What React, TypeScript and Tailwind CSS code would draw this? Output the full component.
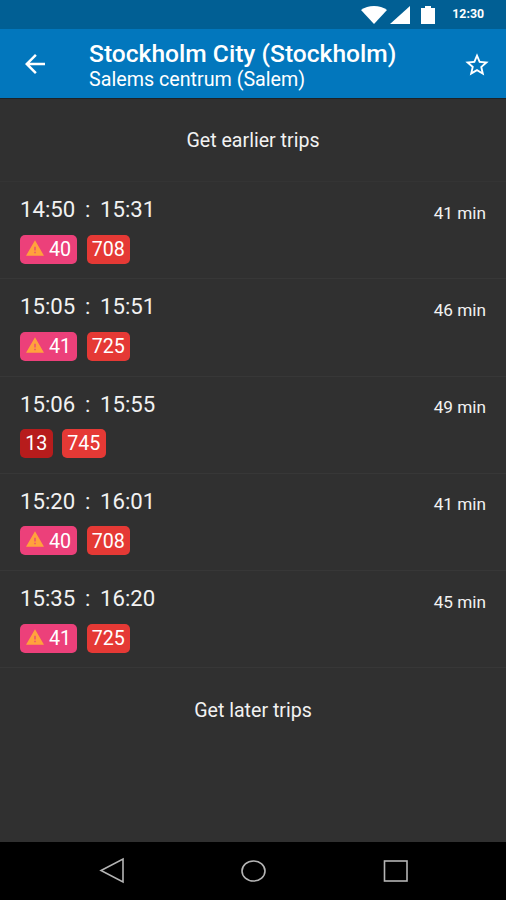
type Badge = {
  line: string;
  color: string;
  width: string;
  warning?: boolean;
};

type Trip = {
  departure: string;
  arrival: string;
  duration: string;
  badges: Badge[];
};

const bus = (line: string): Badge => ({
  line,
  color: "bg-[#e53935]",
  width: "w-[43.5px]",
});

const train = (line: string): Badge => ({
  line,
  color: "bg-[#ec407a]",
  width: "w-[57px]",
  warning: true,
});

const metro = (line: string): Badge => ({
  line,
  color: "bg-[#b71c1c]",
  width: "w-[32.5px]",
});

const trips: Trip[] = [
  { departure: "14:50", arrival: "15:31", duration: "41 min", badges: [train("40"), bus("708")] },
  { departure: "15:05", arrival: "15:51", duration: "46 min", badges: [train("41"), bus("725")] },
  { departure: "15:06", arrival: "15:55", duration: "49 min", badges: [metro("13"), bus("745")] },
  { departure: "15:20", arrival: "16:01", duration: "41 min", badges: [train("40"), bus("708")] },
  { departure: "15:35", arrival: "16:20", duration: "45 min", badges: [train("41"), bus("725")] },
];

function StatusBar() {
  return (
    <div className="flex h-[29px] shrink-0 items-center justify-end bg-[#015f94] pr-[22px]">
      <svg className="h-[18px] w-[26px]" viewBox="0 0 26 18" fill="#fff">
        <path d="M0 4C7-1.2 19-1.2 26 4L13 18Z" />
      </svg>
      <svg className="ml-[3px] h-[18px] w-[20px]" viewBox="0 0 20 18" fill="#fff">
        <path d="M20 0V18H0Z" />
      </svg>
      <svg className="ml-[11px] h-[18px] w-[14px]" viewBox="0 0 14 18" fill="#fff">
        <path d="M4 0H10V2H14V18H0V2H4Z" />
      </svg>
      <span className="ml-[17px] text-[12.3px] leading-none font-bold text-white">
        12:30
      </span>
    </div>
  );
}

function Header() {
  return (
    <header className="flex h-[70px] shrink-0 items-center border-b border-[#1d2327] bg-[#0277bd] pr-[15px] pl-[20px] text-white">
      <svg className="mt-px size-[30px]" viewBox="0 0 24 24" fill="currentColor">
        <path d="M20 11H7.83l5.59-5.59L12 4l-8 8 8 8 1.41-1.41L7.83 13H20v-2z" />
      </svg>
      <div className="mt-[4px] ml-[39px] flex-1 whitespace-nowrap">
        <h1 className="text-[24.6px] leading-[28px] font-medium">
          Stockholm City (Stockholm)
        </h1>
        <p className="text-[19.7px] leading-[23px]">Salems centrum (Salem)</p>
      </div>
      <svg className="mt-[2px] size-[28px]" viewBox="0 0 24 24" fill="currentColor">
        <path d="M22 9.24l-7.19-.62L12 2 9.19 8.63 2 9.24l5.46 4.73L5.82 21 12 17.27 18.18 21l-1.63-7.03L22 9.24zM12 15.4l-3.76 2.27 1-4.28-3.32-2.88 4.38-.38L12 6.1l1.71 4.04 4.38.38-3.32 2.88 1 4.28L12 15.4z" />
      </svg>
    </header>
  );
}

function LineBadge({ badge }: { badge: Badge }) {
  return (
    <span
      className={`flex h-[29px] items-center justify-center rounded-[5px] pt-px text-[19.7px] text-white ${badge.color} ${badge.width}`}
    >
      {badge.warning && (
        <svg className="mr-[5px] mb-[4px] h-[16px] w-[18px]" viewBox="0 0 22 19" fill="#ffa23c">
          <path d="M0 19h22L11 0 0 19zm11.800-3h-1.600v-2h1.600v2zm0-3.500h-1.600V8h1.600v4.500z" />
        </svg>
      )}
      {badge.line}
    </span>
  );
}

function TripRow({ trip }: { trip: Trip }) {
  return (
    <li className="flex h-[97.2px] justify-between border-b border-[#373737] pr-[20px] pl-[20px]">
      <div>
        <div className="mt-[13.5px] flex h-[28px] items-center text-[22.2px]">
          <span className="w-[65px]">{trip.departure}</span>
          <span className="w-[15px]">:</span>
          <span>{trip.arrival}</span>
        </div>
        <div className="mt-[11px] flex gap-[9.5px]">
          {trip.badges.map((badge) => (
            <LineBadge key={badge.line} badge={badge} />
          ))}
        </div>
      </div>
      <span className="mt-[19.5px] text-[17.2px] leading-[22px]">{trip.duration}</span>
    </li>
  );
}

function NavigationBar() {
  return (
    <nav className="h-[58px] shrink-0 bg-black">
      <svg className="h-full w-full" viewBox="0 0 506 58" fill="none" stroke="#b5b5b5" strokeWidth="1.6">
        <path d="M123 17V40L101 28.500Z" />
        <ellipse cx="253.500" cy="29" rx="11.500" ry="10" />
        <rect x="384.500" y="19" width="22.500" height="20" />
      </svg>
    </nav>
  );
}

export default function App() {
  return (
    <div className="flex h-[900px] w-full flex-col overflow-hidden bg-[#303030] font-['Roboto',sans-serif] text-[#f2f2f2]">
      <StatusBar />
      <Header />
      <main className="flex-1">
        <button className="block h-[83.3px] w-full border-b border-[#343434] pt-[2px] text-[19.6px]">
          Get earlier trips
        </button>
        <ul>
          {trips.map((trip) => (
            <TripRow key={trip.departure} trip={trip} />
          ))}
        </ul>
        <button className="block h-[85px] w-full text-[19.6px]">Get later trips</button>
      </main>
      <NavigationBar />
    </div>
  );
}
